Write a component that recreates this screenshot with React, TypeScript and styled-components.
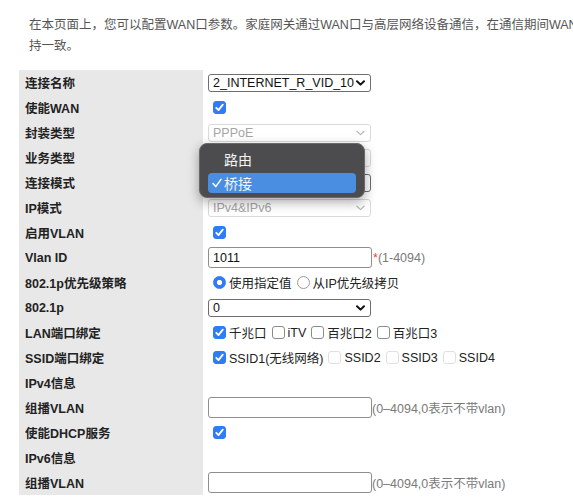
import React from "react";
import styled, { createGlobalStyle } from "styled-components";

const GlobalStyle = createGlobalStyle`
  html, body {
    margin: 0;
    padding: 0;
    background: #ffffff;
    overflow: hidden;
  }
  body {
    font-family: "Liberation Sans", "Noto Sans CJK SC", sans-serif;
    color: #222222;
  }
`;

function App() {
  return (
    <Page>
      <GlobalStyle />
      <Intro>
        <IntroLine>
          在本页面上，您可以配置WAN口参数。家庭网关通过WAN口与高层网络设备通信，在通信期间WAN口参数需与上层网络设备保
        </IntroLine>
        <IntroLine>持一致。</IntroLine>
      </Intro>
      <Form>
        <Row>
          <Label>连接名称</Label>
          <Value>
            <Select value="2_INTERNET_R_VID_10" />
          </Value>
        </Row>
        <Row>
          <Label>使能WAN</Label>
          <Value>
            <Checkbox checked />
          </Value>
        </Row>
        <Row>
          <Label>封装类型</Label>
          <Value>
            <Select value="PPPoE" disabled />
          </Value>
        </Row>
        <Row>
          <Label>业务类型</Label>
          <Value>
            <Select value="INTERNET" disabled />
          </Value>
        </Row>
        <Row>
          <Label>连接模式</Label>
          <Value>
            <Select value="桥接" />
            <Menu>
              <MenuItem>
                <MenuCheck />
                路由
              </MenuItem>
              <MenuItem $active>
                <MenuCheck>
                  <svg width="10" height="10" viewBox="0 0 10 10">
                    <path
                      d="M1 5.6 L3.8 8.6 L9 1.4"
                      fill="none"
                      stroke="#ffffff"
                      strokeWidth="1.5"
                      strokeLinecap="round"
                      strokeLinejoin="round"
                    />
                  </svg>
                </MenuCheck>
                桥接
              </MenuItem>
            </Menu>
          </Value>
        </Row>
        <Row>
          <Label>IP模式</Label>
          <Value>
            <Select value="IPv4&IPv6" disabled />
          </Value>
        </Row>
        <Row>
          <Label>启用VLAN</Label>
          <Value>
            <Checkbox checked />
          </Value>
        </Row>
        <Row>
          <Label>Vlan ID</Label>
          <Value>
            <TextInput>1011</TextInput>
            <Required>*</Required>
            <Hint>(1-4094)</Hint>
          </Value>
        </Row>
        <Row>
          <Label>802.1p优先级策略</Label>
          <Value>
            <Radio $checked />
            <OptionText>使用指定值</OptionText>
            <Radio />
            <OptionText>从IP优先级拷贝</OptionText>
          </Value>
        </Row>
        <Row>
          <Label>802.1p</Label>
          <Value>
            <Select value="0" />
          </Value>
        </Row>
        <Row>
          <Label>LAN端口绑定</Label>
          <Value>
            <Checkbox checked />
            <OptionText>千兆口</OptionText>
            <Checkbox />
            <OptionText>iTV</OptionText>
            <Checkbox />
            <OptionText>百兆口2</OptionText>
            <Checkbox />
            <OptionText>百兆口3</OptionText>
          </Value>
        </Row>
        <Row>
          <Label>SSID端口绑定</Label>
          <Value>
            <Checkbox checked />
            <OptionText>SSID1(无线网络)</OptionText>
            <Checkbox disabled />
            <OptionText>SSID2</OptionText>
            <Checkbox disabled />
            <OptionText>SSID3</OptionText>
            <Checkbox disabled />
            <OptionText>SSID4</OptionText>
          </Value>
        </Row>
        <Row>
          <Label>IPv4信息</Label>
          <Value />
        </Row>
        <Row>
          <Label>组播VLAN</Label>
          <Value>
            <TextInput />
            <Hint>(0–4094,0表示不带vlan)</Hint>
          </Value>
        </Row>
        <Row>
          <Label>使能DHCP服务</Label>
          <Value>
            <Checkbox checked />
          </Value>
        </Row>
        <Row>
          <Label>IPv6信息</Label>
          <Value />
        </Row>
        <Row>
          <Label>组播VLAN</Label>
          <Value>
            <TextInput />
            <Hint>(0–4094,0表示不带vlan)</Hint>
          </Value>
        </Row>
      </Form>
    </Page>
  );
}

function Select({ value, disabled }: SelectProps) {
  return (
    <SelectBox $disabled={disabled}>
      <span>{value}</span>
      <svg width="9" height="6" viewBox="0 0 9 6">
        <path
          d="M1 1.2 L4.5 4.6 L8 1.2"
          fill="none"
          stroke={disabled ? "#b8b8b8" : "#111111"}
          strokeWidth={disabled ? 1.2 : 2}
          strokeLinecap="round"
          strokeLinejoin="round"
        />
      </svg>
    </SelectBox>
  );
}

function Checkbox({ checked, disabled }: CheckboxProps) {
  return (
    <CheckBox $checked={checked} $disabled={disabled}>
      {checked && (
        <svg width="11" height="11" viewBox="0 0 11 11">
          <path
            d="M2.3 5.8 L4.5 8.1 L8.8 2.6"
            fill="none"
            stroke="#ffffff"
            strokeWidth="1.8"
            strokeLinecap="round"
            strokeLinejoin="round"
          />
        </svg>
      )}
    </CheckBox>
  );
}

type SelectProps = {
  value: string;
  disabled?: boolean;
};

type CheckboxProps = {
  checked?: boolean;
  disabled?: boolean;
};

const Page = styled.div`
  width: 573px;
  height: 500px;
  padding-top: 15px;
  box-sizing: border-box;
  overflow: hidden;
`;

const Intro = styled.div`
  padding-left: 29px;
  font-size: 12.5px;
  line-height: 21px;
  color: #555555;
`;

const IntroLine = styled.div`
  white-space: nowrap;
`;

const Form = styled.div`
  margin: 13px 0 0 19px;
`;

const Row = styled.div`
  display: grid;
  grid-template-columns: 184px 1fr;
  height: 25px;
`;

const Label = styled.div`
  display: flex;
  align-items: center;
  padding-left: 6px;
  background: #e8e8e8;
  font-size: 12.5px;
  font-weight: bold;
  color: #222222;
  white-space: nowrap;
`;

const Value = styled.div`
  position: relative;
  display: flex;
  align-items: center;
  padding-left: 5px;
  font-size: 12.5px;
  white-space: nowrap;
`;

const SelectBox = styled.div<{ $disabled?: boolean }>`
  width: 163px;
  height: 18px;
  box-sizing: border-box;
  display: flex;
  align-items: center;
  justify-content: space-between;
  padding: 0 5px 0 4px;
  border: 1px solid ${(props) => (props.$disabled ? "#dadada" : "#6e6e6e")};
  border-radius: 3px;
  background: #ffffff;
  color: ${(props) => (props.$disabled ? "#a5a5a5" : "#111111")};
  font-size: 12.5px;
`;

const CheckBox = styled.span<{ $checked?: boolean; $disabled?: boolean }>`
  width: 13px;
  height: 13px;
  box-sizing: border-box;
  display: inline-flex;
  align-items: center;
  justify-content: center;
  flex: none;
  margin: 0 3px 0 5px;
  border-radius: 3px;
  background: ${(props) => (props.$checked ? "#2f7cf6" : "#ffffff")};
  border: 1px solid
    ${(props) =>
      props.$checked ? "#2f7cf6" : props.$disabled ? "#e0e0e0" : "#8c8c8c"};
`;

const Radio = styled.span<{ $checked?: boolean }>`
  width: 13px;
  height: 13px;
  box-sizing: border-box;
  flex: none;
  margin: 0 3px 0 5px;
  border-radius: 50%;
  border: 1px solid ${(props) => (props.$checked ? "#2f7cf6" : "#9a9a9a")};
  background: ${(props) =>
    props.$checked
      ? "radial-gradient(circle, #ffffff 0 2.4px, #2f7cf6 2.9px)"
      : "#ffffff"};
`;

const OptionText = styled.span`
  color: #222222;
  font-size: 12.5px;
`;

const TextInput = styled.div`
  width: 164px;
  height: 21px;
  box-sizing: border-box;
  display: flex;
  align-items: center;
  padding-left: 4px;
  border: 1px solid #8e8e8e;
  border-radius: 3px;
  background: #ffffff;
  color: #111111;
  font-size: 12.5px;
`;

const Required = styled.span`
  margin-left: 1px;
  color: #e2453f;
  font-size: 12.5px;
`;

const Hint = styled.span`
  color: #7a7a7a;
  font-size: 12.5px;
`;

const Menu = styled.div`
  position: absolute;
  left: -4px;
  top: -27px;
  z-index: 2;
  width: 166px;
  height: 55px;
  box-sizing: border-box;
  display: flex;
  flex-direction: column;
  gap: 4px;
  padding: 5px 8px;
  border: 1px solid #6a6a6a;
  border-radius: 8px;
  background: #4c4c4e;
  box-shadow: 0 4px 12px rgba(0, 0, 0, 0.35);
`;

const MenuItem = styled.div<{ $active?: boolean }>`
  height: 20px;
  display: flex;
  align-items: center;
  padding-left: 4px;
  border-radius: 4px;
  background: ${(props) => (props.$active ? "#4a8ee2" : "transparent")};
  color: #f4f4f4;
  font-family: "Noto Sans CJK SC", sans-serif;
  font-size: 14px;
`;

const MenuCheck = styled.span`
  width: 12px;
  display: inline-flex;
  align-items: center;
`;

export default App;
